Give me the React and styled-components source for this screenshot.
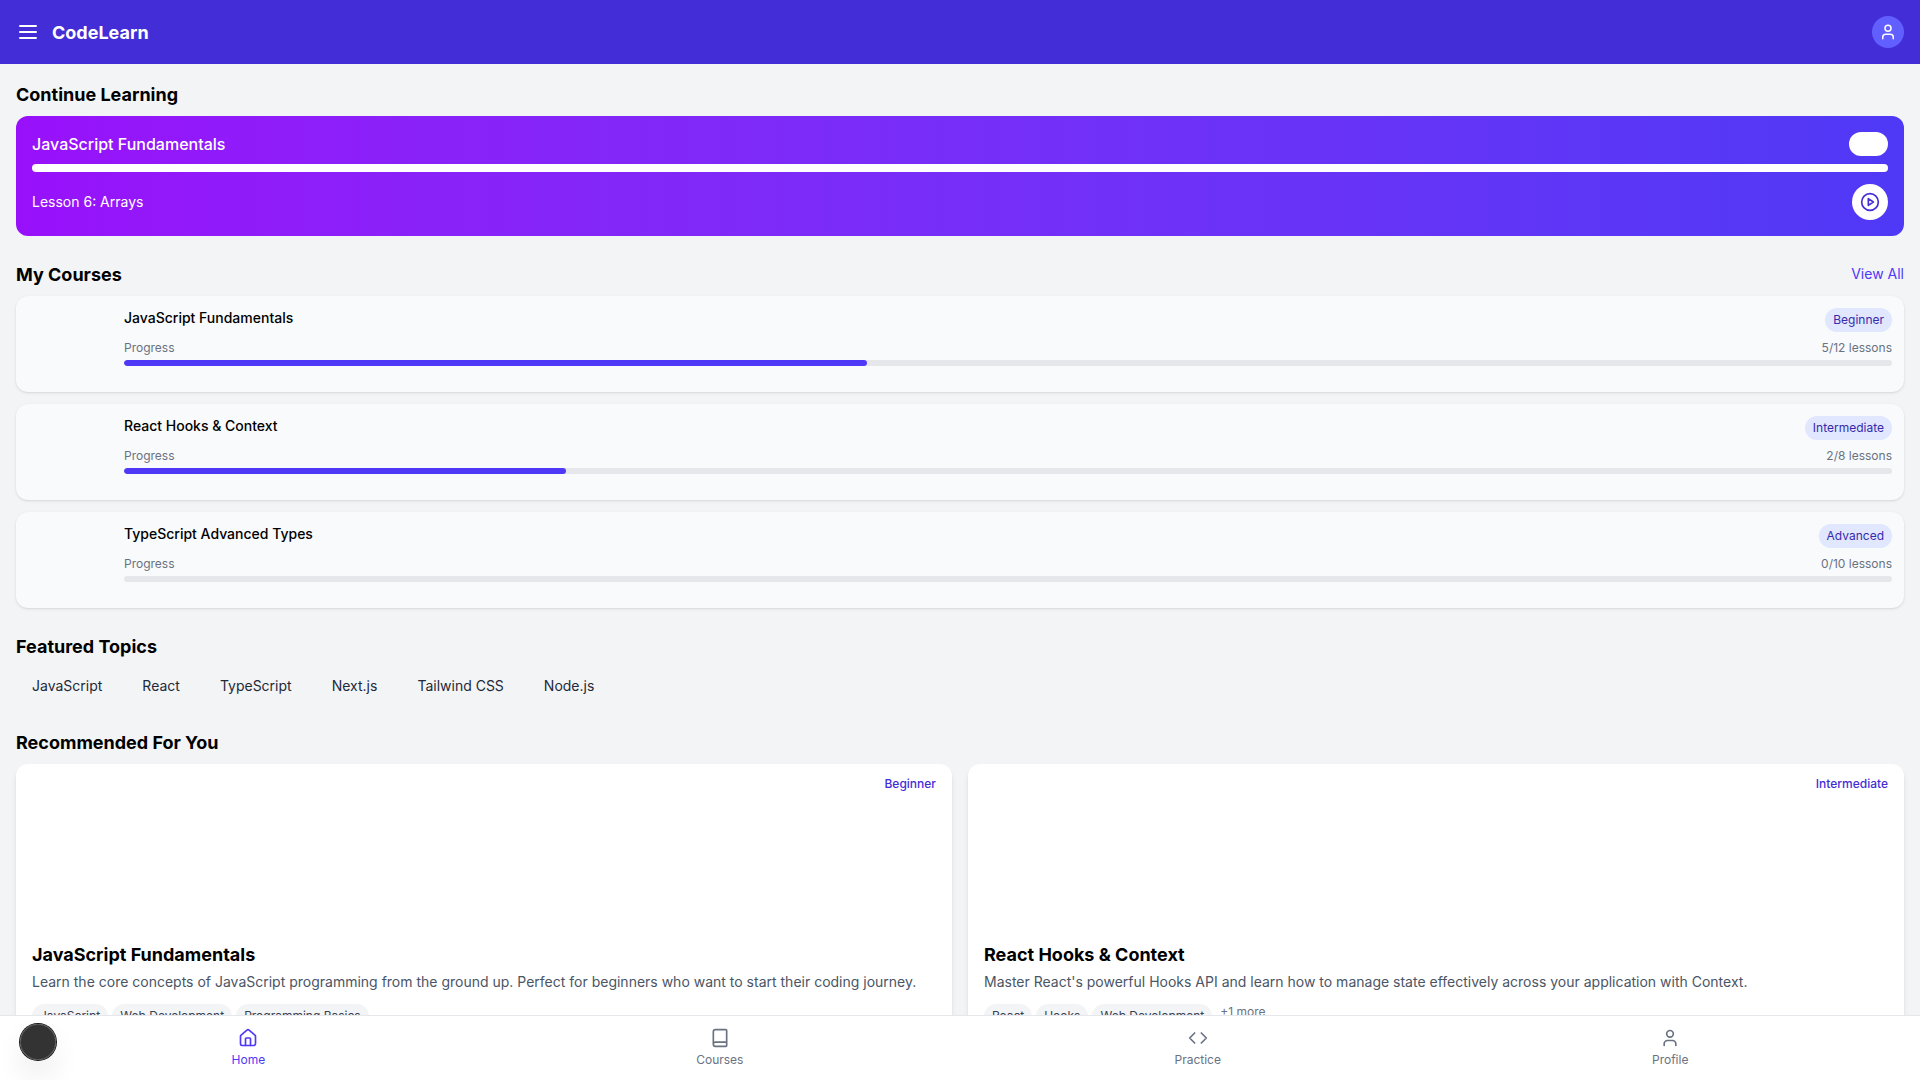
import React from "react";
import styled, { createGlobalStyle } from "styled-components";

const Global = createGlobalStyle`
  *, *::before, *::after { box-sizing: border-box; }
  html, body { margin: 0; padding: 0; height: 100%; overflow: hidden; }
  body {
    font-family: Inter, "Liberation Sans", sans-serif;
    font-size: 16px;
    line-height: 24px;
    color: #000;
    background: #f3f4f6;
  }
  h1, h2, h3, p { margin: 0; }
  button { font: inherit; border: 0; background: none; padding: 0; color: inherit; }
`;

const Page = styled.div`
  height: 100vh;
  display: flex;
  flex-direction: column;
  overflow: hidden;
`;

const Header = styled.header`
  flex: none;
  display: flex;
  align-items: center;
  justify-content: space-between;
  padding: 16px;
  height: 64px;
  background: #432dd7;
  color: #fff;
`;

const Brand = styled.div`
  display: flex;
  align-items: center;
  gap: 12px;
`;

const BrandName = styled.h1`
  padding-top: 2px;
  font-size: 18px;
  line-height: 26px;
  font-weight: 700;
`;

const Avatar = styled.div`
  display: flex;
  align-items: center;
  justify-content: center;
  width: 32px;
  height: 32px;
  border-radius: 50%;
  background: #615fff;
`;

const Glyph = styled.svg`
  display: block;
  width: ${(p) => p.$size}px;
  height: ${(p) => p.$size}px;
  fill: none;
  stroke: currentColor;
  stroke-width: 2;
  stroke-linecap: round;
  stroke-linejoin: round;
`;

const Main = styled.main`
  flex: 1;
  min-height: 0;
  overflow: hidden;
  padding: 16px;
`;

const Section = styled.section`
  margin-bottom: 24px;
`;

const SectionHead = styled.div`
  display: flex;
  align-items: center;
  justify-content: space-between;
  margin-bottom: 8px;
`;

const SectionTitle = styled.h2`
  padding-top: 2px;
  font-size: 18px;
  line-height: 26px;
  font-weight: 700;
`;

const ViewAll = styled.button`
  font-size: 14px;
  line-height: 20px;
  color: #4f39f6;
`;

const ContinueCard = styled.div`
  padding: 16px;
  border-radius: 12px;
  color: #fff;
  background: linear-gradient(to right in oklab, #9810fa 0%, #4f39f6 100%);
`;

const Row = styled.div`
  display: flex;
  align-items: ${(p) => p.$align || "center"};
  justify-content: space-between;
`;

const ContinueTitle = styled.h3`
  font-size: 16px;
  line-height: 24px;
  font-weight: 500;
`;

const BlankPill = styled.span`
  width: 39.5px;
  height: 24px;
  border-radius: 12px;
  background: #fff;
`;

const ContinueBar = styled.div`
  height: 8px;
  margin: 8px 0 12px;
  border-radius: 4px;
  background: #fff;
`;

const LessonName = styled.p`
  font-size: 14px;
  line-height: 20px;
`;

const PlayButton = styled.button`
  display: flex;
  padding: 8px;
  border-radius: 50%;
  background: #fff;
  color: #432dd7;
`;

const CourseList = styled.div`
  display: flex;
  flex-direction: column;
  gap: 12px;
`;

const CourseCard = styled.article`
  display: flex;
  height: 96px;
  border-radius: 12px;
  background: #f9fafb;
  overflow: hidden;
  box-shadow: 0 1px 3px 0 rgb(0 0 0 / 0.1), 0 1px 2px -1px rgb(0 0 0 / 0.1);
`;

const Thumb = styled.div`
  flex: none;
  width: 96px;
`;

const CourseBody = styled.div`
  flex: 1;
  padding: 12px;
`;

const CourseTitle = styled.h3`
  font-size: 14px;
  line-height: 20px;
  font-weight: 500;
`;

const LevelBadge = styled.span`
  padding: 4px 8px;
  border-radius: 12px;
  font-size: 12px;
  line-height: 16px;
  background: #e0e7ff;
  color: #372aac;
`;

const ProgressLabels = styled(Row)`
  margin: 8px 0 4px;
  font-size: 12px;
  line-height: 16px;
  color: #6a7282;
`;

const Track = styled.div`
  height: 6px;
  border-radius: 3px;
  background: #e5e7eb;
  overflow: hidden;
`;

const Fill = styled.div`
  height: 100%;
  border-radius: 3px;
  background: #4f39f6;
`;

const Topics = styled.div`
  display: flex;
  gap: 8px;
`;

const Topic = styled.button`
  padding: 8px 16px;
  font-size: 14px;
  line-height: 20px;
  color: #1e2939;
`;

const CardGrid = styled.div`
  display: grid;
  grid-template-columns: 1fr 1fr;
  gap: 16px;
`;

const RecCard = styled.article`
  border-radius: 12px;
  background: #fff;
  box-shadow: 0 4px 6px -1px rgb(0 0 0 / 0.1), 0 2px 4px -2px rgb(0 0 0 / 0.1);
`;

const Cover = styled.div`
  display: flex;
  justify-content: flex-end;
  align-items: flex-start;
  height: 160px;
  padding: 8px;
`;

const CoverLevel = styled.span`
  padding: 4px 8px;
  font-size: 12px;
  line-height: 16px;
  font-weight: 500;
  color: #432dd7;
`;

const RecBody = styled.div`
  padding: 16px;
`;

const RecTitle = styled.h3`
  padding-top: 2px;
  font-size: 18px;
  line-height: 26px;
  font-weight: 700;
`;

const RecText = styled.p`
  margin-top: 4px;
  font-size: 14px;
  line-height: 20px;
  color: #4a5565;
`;

const Tags = styled.div`
  display: flex;
  align-items: flex-start;
  gap: 4px;
  margin-top: 12px;
  font-size: 12px;
  line-height: 16px;
`;

const Tag = styled.span`
  padding: 4px 8px;
  border-radius: 12px;
  background: #f3f4f6;
  color: #364153;
`;

const MoreTags = styled.span`
  margin-left: 4px;
  color: #6a7282;
`;

const BottomNav = styled.nav`
  flex: none;
  display: flex;
  justify-content: space-around;
  padding: 12px 16px;
  border-top: 1px solid #e5e7eb;
  background: #fff;
`;

const NavItem = styled.button`
  display: flex;
  flex-direction: column;
  align-items: center;
  gap: 4px;
  font-size: 12px;
  line-height: 16px;
  color: ${(p) => (p.$active ? "#4f39f6" : "#6a7282")};
`;

const FloatingDot = styled.div`
  position: fixed;
  left: 20px;
  bottom: 20px;
  width: 36px;
  height: 36px;
  border-radius: 50%;
  background: rgba(0, 0, 0, 0.8);
  box-shadow: 0 0 0 1px #171717, inset 0 0 0 1px rgba(255, 255, 255, 0.14),
    0 16px 32px -8px rgba(0, 0, 0, 0.24);
`;

const shapes = {
  menu: <path d="M4 6h16M4 12h16M4 18h16" />,
  user: (
    <>
      <path d="M19 21v-2a4 4 0 0 0-4-4H9a4 4 0 0 0-4 4v2" />
      <circle cx="12" cy="7" r="4" />
    </>
  ),
  play: (
    <>
      <circle cx="12" cy="12" r="10" />
      <path d="m10 8 6 4-6 4z" />
    </>
  ),
  home: (
    <>
      <path d="M15 21v-8a1 1 0 0 0-1-1h-4a1 1 0 0 0-1 1v8" />
      <path d="M3 10a2 2 0 0 1 .709-1.528l7-5.999a2 2 0 0 1 2.582 0l7 5.999A2 2 0 0 1 21 10v9a2 2 0 0 1-2 2H5a2 2 0 0 1-2-2z" />
    </>
  ),
  book: (
    <path d="M4 19.5v-15A2.5 2.5 0 0 1 6.5 2H19a1 1 0 0 1 1 1v18a1 1 0 0 1-1 1H6.5a1 1 0 0 1 0-5H20" />
  ),
  code: <path d="m16 18 6-6-6-6M8 6l-6 6 6 6" />,
};

const Icon = ({ name, size = 20 }) => (
  <Glyph viewBox="0 0 24 24" $size={size} aria-hidden="true">
    {shapes[name]}
  </Glyph>
);

const courses = [
  { title: "JavaScript Fundamentals", level: "Beginner", lessons: "5/12", percent: 42 },
  { title: "React Hooks & Context", level: "Intermediate", lessons: "2/8", percent: 25 },
  { title: "TypeScript Advanced Types", level: "Advanced", lessons: "0/10", percent: 0 },
];

const topics = ["JavaScript", "React", "TypeScript", "Next.js", "Tailwind CSS", "Node.js"];

const recommended = [
  {
    title: "JavaScript Fundamentals",
    level: "Beginner",
    text: "Learn the core concepts of JavaScript programming from the ground up. Perfect for beginners who want to start their coding journey.",
    tags: ["JavaScript", "Web Development", "Programming Basics"],
  },
  {
    title: "React Hooks & Context",
    level: "Intermediate",
    text: "Master React's powerful Hooks API and learn how to manage state effectively across your application with Context.",
    tags: ["React", "Hooks", "Web Development"],
    more: 1,
  },
];

const navItems = [
  { label: "Home", icon: "home", active: true },
  { label: "Courses", icon: "book" },
  { label: "Practice", icon: "code" },
  { label: "Profile", icon: "user" },
];

export default function App() {
  return (
    <Page>
      <Global />
      <Header>
        <Brand>
          <Icon name="menu" size={24} />
          <BrandName>CodeLearn</BrandName>
        </Brand>
        <Avatar>
          <Icon name="user" size={18} />
        </Avatar>
      </Header>

      <Main>
        <Section>
          <SectionHead>
            <SectionTitle>Continue Learning</SectionTitle>
          </SectionHead>
          <ContinueCard>
            <Row>
              <ContinueTitle>JavaScript Fundamentals</ContinueTitle>
              <BlankPill />
            </Row>
            <ContinueBar />
            <Row>
              <LessonName>Lesson 6: Arrays</LessonName>
              <PlayButton aria-label="Play">
                <Icon name="play" />
              </PlayButton>
            </Row>
          </ContinueCard>
        </Section>

        <Section>
          <SectionHead>
            <SectionTitle>My Courses</SectionTitle>
            <ViewAll>View All</ViewAll>
          </SectionHead>
          <CourseList>
            {courses.map((c) => (
              <CourseCard key={c.title}>
                <Thumb />
                <CourseBody>
                  <Row $align="flex-start">
                    <CourseTitle>{c.title}</CourseTitle>
                    <LevelBadge>{c.level}</LevelBadge>
                  </Row>
                  <ProgressLabels>
                    <span>Progress</span>
                    <span>{c.lessons} lessons</span>
                  </ProgressLabels>
                  <Track>
                    <Fill style={{ width: `${c.percent}%` }} />
                  </Track>
                </CourseBody>
              </CourseCard>
            ))}
          </CourseList>
        </Section>

        <Section>
          <SectionHead>
            <SectionTitle>Featured Topics</SectionTitle>
          </SectionHead>
          <Topics>
            {topics.map((t) => (
              <Topic key={t}>{t}</Topic>
            ))}
          </Topics>
        </Section>

        <Section>
          <SectionHead>
            <SectionTitle>Recommended For You</SectionTitle>
          </SectionHead>
          <CardGrid>
            {recommended.map((r) => (
              <RecCard key={r.title}>
                <Cover>
                  <CoverLevel>{r.level}</CoverLevel>
                </Cover>
                <RecBody>
                  <RecTitle>{r.title}</RecTitle>
                  <RecText>{r.text}</RecText>
                  <Tags>
                    {r.tags.map((t) => (
                      <Tag key={t}>{t}</Tag>
                    ))}
                    {r.more && <MoreTags>+{r.more} more</MoreTags>}
                  </Tags>
                </RecBody>
              </RecCard>
            ))}
          </CardGrid>
        </Section>
      </Main>

      <BottomNav>
        {navItems.map((n) => (
          <NavItem key={n.label} $active={n.active}>
            <Icon name={n.icon} />
            <span>{n.label}</span>
          </NavItem>
        ))}
      </BottomNav>
      <FloatingDot />
    </Page>
  );
}
